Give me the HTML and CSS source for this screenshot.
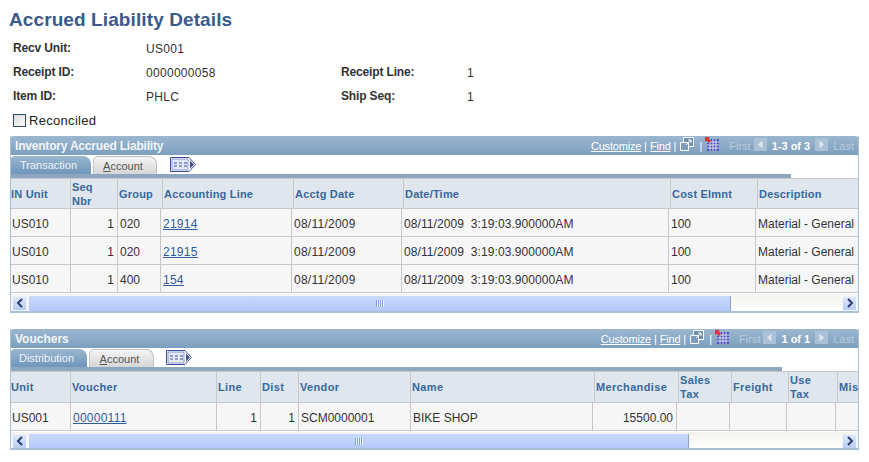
FILE: index.html
```html
<!DOCTYPE html>
<html lang="en">
<head>
  <meta charset="UTF-8">
  <title>Accrued Liability Details</title>
  <link rel="stylesheet" href="styles.css">
</head>
<body>
  <svg class="defs" width="0" height="0">
    <symbol id="tab-menu" viewBox="0 0 28 15">
      <path d="M1.5 .5H20L26.500 7.500L20 14.500H1.500Z" fill="#fff" stroke="#3f4f96"/>
      <path d="M3 2H19L19 13H3Z" fill="#e3e9f7" stroke="#8c9bd0"/>
      <path d="M5 6h3M10 6h3M15 6h3M5 9h3M10 9h3M15 9h3" stroke="#3f4f96" fill="none"/>
      <path d="M21 3.500L25 7.500L21 11.500Z" fill="#3f4f96"/>
    </symbol>
    <symbol id="new-window" viewBox="0 0 14 14">
      <path d="M3.500 .5H13.500V9.500H3.500Z" fill="#6f8fb0" stroke="#fff"/>
      <path d="M.5 5.500H8.500V13.500H.5Z" fill="#7f9dbb" stroke="#fff"/>
      <path d="M6 8L11 3M8 3H11V6" fill="none" stroke="#fff"/>
    </symbol>
    <symbol id="grid-view" viewBox="0 0 14 14">
      <path d="M2 2H14V14H2Z" fill="#4a4fc0"/>
      <path d="M5 2V14M8 2V14M11 2V14M2 5H14M2 8H14M2 11H14" stroke="#dfe3f5"/>
      <path d="M0 0H5L3.500 1.500L6 4L4 6L1.500 3.500L0 5Z" fill="#d8323a"/>
    </symbol>
    <symbol id="nav-prev" viewBox="0 0 13 13">
      <rect width="13" height="13" fill="#a9c0d6"/>
      <path d="M8.500 2.500L4 6.500L8.500 10.500Z" fill="#dde7f0"/>
    </symbol>
    <symbol id="nav-next" viewBox="0 0 13 13">
      <rect width="13" height="13" fill="#a9c0d6"/>
      <path d="M4.500 2.500L9 6.500L4.500 10.500Z" fill="#dde7f0"/>
    </symbol>
    <symbol id="arrow-left" viewBox="0 0 8 10">
      <path d="M6 1L2 5L6 9" fill="none" stroke="#2b3f73" stroke-width="2"/>
    </symbol>
    <symbol id="arrow-right" viewBox="0 0 8 10">
      <path d="M2 1L6 5L2 9" fill="none" stroke="#2b3f73" stroke-width="2"/>
    </symbol>
  </svg>

  <h1 class="page-title">Accrued Liability Details</h1>

  <div class="fields">
    <span class="field-label">Recv Unit:</span>
    <span class="field-value wide">US001</span>

    <span class="field-label">Receipt ID:</span>
    <span class="field-value">0000000058</span>
    <span class="field-label">Receipt Line:</span>
    <span class="field-value">1</span>

    <span class="field-label">Item ID:</span>
    <span class="field-value">PHLC</span>
    <span class="field-label">Ship Seq:</span>
    <span class="field-value">1</span>

    <label class="check-row"><span class="check-box"></span>Reconciled</label>
  </div>

  <section class="panel inventory">
    <div class="panel-head">
      <span class="panel-title">Inventory Accrued Liability</span>
      <div class="panel-tools">
        <a class="tool-link">Customize</a><span class="sep">|</span><a class="tool-link">Find</a><span class="sep">|</span>
        <svg class="tool-icon"><use href="#new-window"/></svg><span class="sep">|</span>
        <svg class="tool-icon grid-icon"><use href="#grid-view"/></svg>
        <span class="nav-text first">First</span>
        <svg class="nav-btn"><use href="#nav-prev"/></svg>
        <strong class="nav-count">1-3 of 3</strong>
        <svg class="nav-btn"><use href="#nav-next"/></svg>
        <span class="nav-text last">Last</span>
      </div>
    </div>
    <div class="tabs">
      <span class="tab active">Transaction</span>
      <span class="tab"><u>A</u>ccount</span>
      <svg class="tab-menu"><use href="#tab-menu"/></svg>
    </div>
    <div class="tab-bar"></div>

    <div class="row head">
      <div>IN Unit</div><div>Seq<br>Nbr</div><div>Group</div><div>Accounting Line</div><div>Acctg Date</div><div>Date/Time</div><div>Cost Elmnt</div><div>Description</div>
    </div>
    <div class="row">
      <div>US010</div><div class="num">1</div><div>020</div><div class="code"><a href="#">21914</a></div><div class="code">08/11/2009</div><div class="stamp">08/11/2009 &nbsp;3:19:03.900000AM</div><div>100</div><div>Material - General</div>
    </div>
    <div class="row">
      <div>US010</div><div class="num">1</div><div>020</div><div class="code"><a href="#">21915</a></div><div class="code">08/11/2009</div><div class="stamp">08/11/2009 &nbsp;3:19:03.900000AM</div><div>100</div><div>Material - General</div>
    </div>
    <div class="row">
      <div>US010</div><div class="num">1</div><div>400</div><div class="code"><a href="#">154</a></div><div class="code">08/11/2009</div><div class="stamp">08/11/2009 &nbsp;3:19:03.900000AM</div><div>100</div><div>Material - General</div>
    </div>

    <div class="scrollbar">
      <span class="scroll-btn"><svg><use href="#arrow-left"/></svg></span>
      <span class="scroll-thumb"><span class="grip"></span></span>
      <span class="scroll-btn right"><svg><use href="#arrow-right"/></svg></span>
    </div>
  </section>

  <section class="panel vouchers">
    <div class="panel-head">
      <span class="panel-title">Vouchers</span>
      <div class="panel-tools">
        <a class="tool-link">Customize</a><span class="sep">|</span><a class="tool-link">Find</a><span class="sep">|</span>
        <svg class="tool-icon"><use href="#new-window"/></svg><span class="sep">|</span>
        <svg class="tool-icon grid-icon"><use href="#grid-view"/></svg>
        <span class="nav-text first">First</span>
        <svg class="nav-btn"><use href="#nav-prev"/></svg>
        <strong class="nav-count">1 of 1</strong>
        <svg class="nav-btn"><use href="#nav-next"/></svg>
        <span class="nav-text last">Last</span>
      </div>
    </div>
    <div class="tabs">
      <span class="tab active">Distribution</span>
      <span class="tab"><u>A</u>ccount</span>
      <svg class="tab-menu"><use href="#tab-menu"/></svg>
    </div>
    <div class="tab-bar"></div>

    <div class="row head">
      <div>Unit</div><div>Voucher</div><div>Line</div><div>Dist</div><div>Vendor</div><div>Name</div><div>Merchandise</div><div>Sales<br>Tax</div><div>Freight</div><div>Use<br>Tax</div><div>Mis</div>
    </div>
    <div class="row">
      <div>US001</div><div class="code"><a href="#">00000111</a></div><div class="num">1</div><div class="num">1</div><div>SCM0000001</div><div>BIKE SHOP</div><div class="num">15500.00</div><div></div><div></div><div></div><div></div>
    </div>

    <div class="scrollbar">
      <span class="scroll-btn"><svg><use href="#arrow-left"/></svg></span>
      <span class="scroll-thumb"><span class="grip"></span></span>
      <span class="scroll-btn right"><svg><use href="#arrow-right"/></svg></span>
    </div>
  </section>
</body>
</html>
```

FILE: styles.css
```css
* {
  margin: 0;
  padding: 0;
  box-sizing: border-box;
}

html, body {
  height: 462px;
  overflow: hidden;
}

body {
  background: white;
  font-family: "Liberation Sans", Arial, sans-serif;
  font-size: 12px;
  color: #333;
  padding: 0 10px;
}

.defs {
  display: block;
  height: 0;
}

.page-title {
  color: #3a5a8c;
  font-size: 19px;
  letter-spacing: .1px;
  font-weight: bold;
  line-height: 24px;
  padding-top: 8px;
  margin-left: -1px;
}

.fields {
  display: grid;
  grid-template-columns: 133px 195px 126px 1fr;
  grid-auto-rows: 24px;
  align-items: center;
  padding-left: 3px;
  margin-top: 5px;
  height: 98px;
}

.field-label {
  font-weight: bold;
  letter-spacing: -.15px;
  padding-bottom: 2px;
}

.field-value {
  letter-spacing: .3px;
}

.field-value.wide {
  grid-column: 2 / 5;
}

.check-row {
  grid-column: 1 / 5;
  display: flex;
  align-items: center;
  gap: 3px;
  padding-bottom: 2px;
  font-size: 13px;
  letter-spacing: .3px;
  color: #222;
}

.check-box {
  width: 13px;
  height: 13px;
  border: 1px solid #2f4a6b;
  background: linear-gradient(135deg, #ddd, #f8f8f8);
}

.panel {
  width: 849px;
  border: solid #a9c0d6;
  border-width: 0 1px 2px;
  overflow: hidden;
}

.inventory {
  height: 177px;
  margin-top: 1px;
}

.vouchers {
  height: 121px;
  margin-top: 16px;
}

.panel-head {
  height: 19px;
  margin: 0 -1px;
  padding: 0 5px;
  display: flex;
  justify-content: space-between;
  align-items: center;
  background: linear-gradient(#9bb7cf, #7c9fbe);
  border-radius: 4px 4px 0 0;
  color: white;
}

.panel-title {
  font-weight: bold;
  color: #f2f6fa;
}

.inventory .panel-title {
  letter-spacing: -.2px;
}

.panel-tools {
  display: flex;
  align-items: center;
  font-size: 11px;
}

.tool-link {
  color: white;
  letter-spacing: -.2px;
  text-decoration: underline;
}

.sep {
  margin: 0 3px;
}

.tool-icon {
  width: 14px;
  height: 14px;
  margin: 0 2px 4px 1px;
}

.grid-icon {
  margin-left: 0;
}

.nav-text {
  color: #b9cbdc;
}

.nav-text.first {
  margin: 0 3px 0 8px;
}

.nav-text.last {
  margin-left: 5px;
}

.nav-btn {
  width: 13px;
  height: 13px;
  margin-bottom: 3px;
}

.nav-count {
  margin: 0 5px;
}

.tabs {
  height: 19px;
  display: flex;
  align-items: flex-end;
  gap: 2px;
  margin-left: -1px;
  padding-top: 1px;
}

.tab {
  height: 18px;
  width: 64px;
  padding-right: 4px;
  font-size: 11px;
  line-height: 18px;
  text-align: center;
  color: #555;
  background: linear-gradient(#f4f4f4, #d6d6d6);
  border: 1px solid #c2c2c2;
  border-bottom: 0;
  border-radius: 5px 8px 0 0;
}

.tab.active {
  width: 81px;
  color: #eef3f8;
  background: linear-gradient(#9ab7d1, #7096ba);
  border: 0;
}

.vouchers .tab.active {
  width: 77px;
}

.vouchers .tab {
  width: 65px;
}

.tab-menu {
  width: 28px;
  height: 15px;
  margin: 0 0 2px 10px;
}

.vouchers .tab-menu {
  margin-left: 9px;
}

.tab-bar {
  height: 4px;
  background: #8ea6bf;
  margin-left: -1px;
}

.inventory .tab-bar {
  width: 781px;
}

.vouchers .tab-bar {
  width: 772px;
}

.row {
  display: grid;
  height: 28px;
  border-bottom: 1px solid #c8c8c8;
  background: #f6f6f6;
}

.row > div {
  display: flex;
  align-items: center;
  padding: 2px 2px 0;
  border-right: 1px solid #c8c8c8;
  white-space: nowrap;
}

.row > div:first-child {
  padding-left: 1px;
}

.row > div:last-child {
  border-right: 0;
}

.row > .num {
  justify-content: flex-end;
  padding-right: 3px;
}

.row > .code {
  letter-spacing: .25px;
}

.row > .stamp {
  letter-spacing: .08px;
}

.row a {
  color: #2f5b9c;
}

.row.head {
  height: 31px;
  background: #dfe6ed;
  border-top: 1px solid #c8c8c8;
  color: #36699f;
  font-weight: bold;
  font-size: 11px;
  letter-spacing: .2px;
  line-height: 14px;
}

.row.head > div {
  padding: 0 1px;
}

.row.head > div:first-child {
  padding-left: 0;
}

.inventory .row {
  grid-template-columns: 60px 47px 43px 131px 110px 267px 87px 1fr;
}

.inventory .row.head {
  grid-template-columns: 60px 47px 45px 131px 110px 267px 87px 1fr;
}

.vouchers .row {
  grid-template-columns: 60px 146px 44px 38px 112px 182px 84px 53px 57px 49px 1fr;
}

.vouchers .row.head {
  grid-template-columns: 60px 146px 44px 38px 112px 184px 84px 53px 57px 49px 1fr;
  height: 32px;
  letter-spacing: .35px;
}

.scrollbar {
  height: 18px;
  margin-top: 1px;
  display: flex;
  align-items: center;
  background: linear-gradient(#f4f3ee, white);
}

.scroll-btn {
  width: 15px;
  height: 15px;
  margin: 0 1px;
  display: flex;
  align-items: center;
  justify-content: center;
  background: linear-gradient(#dfe8fa, #b9cdf2);
  border: 1px solid #eef3fc;
}

.scroll-btn svg {
  width: 8px;
  height: 10px;
}

.scroll-btn.right {
  margin-left: auto;
}

.scroll-thumb {
  height: 17px;
  display: flex;
  align-items: center;
  justify-content: center;
  background: linear-gradient(#c9d9fb, #b3c8f8);
  border: 1px solid #eef3fc;
  border-right-color: #8aa3c4;
  border-radius: 2px;
}

.inventory .scroll-thumb {
  width: 703px;
}

.vouchers .scroll-thumb {
  width: 661px;
}

.grip {
  width: 8px;
  height: 7px;
  background: repeating-linear-gradient(90deg, #7f9fd8 0 1px, #eef3fc 1px 2px);
}
```
